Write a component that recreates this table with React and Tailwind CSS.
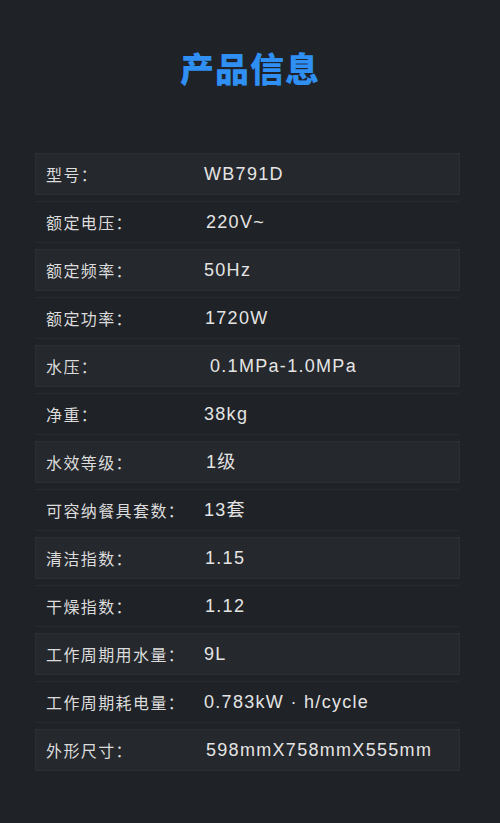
export default function App() {
  const rows = [
    ["型号：", "WB791D", ""],
    ["额定电压：", "220V~", "pl-[2px]"],
    ["额定频率：", "50Hz", ""],
    ["额定功率：", "1720W", "pl-[1px]"],
    ["水压：", "0.1MPa-1.0MPa", "pl-[6px]"],
    ["净重：", "38kg", ""],
    ["水效等级：", "1级", "pl-[2px]"],
    ["可容纳餐具套数：", "13套", ""],
    ["清洁指数：", "1.15", "pl-[1px]"],
    ["干燥指数：", "1.12", "pl-[1px]"],
    ["工作周期用水量：", "9L", ""],
    ["工作周期耗电量：", "0.783kW · h/cycle", ""],
    ["外形尺寸：", "598mmX758mmX555mm", "pl-[2px]"],
  ];
  return (
    <div
      className="w-[500px] h-[823px] bg-[#1f2226] overflow-hidden"
      style={{ fontFamily: '"Liberation Sans", "Noto Sans CJK SC", sans-serif' }}
    >
      <h1 className="pt-[48px] h-[150px] text-center text-[34px] leading-[40px] font-bold tracking-[1px] text-[#2f8ff2]"
        style={{ fontFamily: '"Noto Sans CJK SC", sans-serif', fontWeight: 900 }}>
        产品信息
      </h1>
      <div className="ml-[35px] w-[425px] flex flex-col">
        {rows.map(([k, v, pad], i) => (
          <div key={i} className="h-[48px] py-[3px]">
            <div
              className={
                "h-full flex items-center border " +
                (i % 2 === 0
                  ? "bg-[#25282c] border-[#2b2e32]"
                  : "bg-transparent border-transparent border-t-[#272a2e] border-b-[#272a2e]")
              }
            >
              <div
                className="w-[168px] pl-[10px] text-[16px] tracking-[1.4px] text-[#dcdcdc]"
                style={{ fontFamily: '"Noto Sans CJK SC", sans-serif' }}
              >
                {k}
              </div>
              <div className={"text-[18px] tracking-[1.3px] text-[#e4e4e4] " + pad}>{v}</div>
            </div>
          </div>
        ))}
      </div>
    </div>
  );
}
